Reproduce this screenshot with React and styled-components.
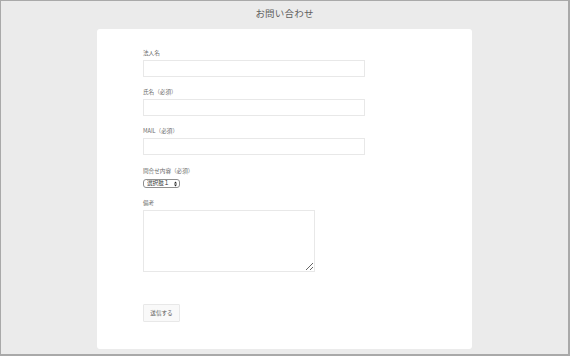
import React from 'react'
import styled, { createGlobalStyle } from 'styled-components'

const Global = createGlobalStyle`
  html, body { margin: 0; padding: 0; }
  body { background: #ebebeb; font-family: "Noto Sans CJK JP", "Noto Sans", sans-serif; }
  * { box-sizing: border-box; }
`

const Frame = styled.div`
  width: 570px;
  height: 356px;
  background: #ebebeb;
  border: 1px solid #a9a9a9;
  border-right-width: 2px;
  border-bottom-width: 2px;
  display: flex;
  flex-direction: column;
  align-items: center;
`

const Title = styled.h1`
  margin: 0;
  height: 28px;
  padding-top: 5px;
  font-size: 9.5px;
  line-height: 14px;
  font-weight: 400;
  color: #606060;
  letter-spacing: 0.2px;
`

const Card = styled.form`
  width: 375px;
  height: 320px;
  background: #fff;
  border-radius: 3px;
  padding: 20px 0 0 46px;
  display: flex;
  flex-direction: column;
  align-items: flex-start;
`

const Field = styled.div`
  display: flex;
  flex-direction: column;
  align-items: flex-start;
  margin-bottom: ${p => p.gap}px;
`

const Label = styled.label`
  display: block;
  font-size: 5.6px;
  line-height: 8px;
  height: 8px;
  color: #6a6a6a;
  margin-bottom: ${p => p.space || 3}px;
  white-space: nowrap;
`

const Input = styled.input`
  width: 222px;
  height: 17px;
  border: 1px solid #e8e8e8;
  background: #fff;
  padding: 0 4px;
  font-size: 6px;
  outline: none;
`

const SelectBox = styled.div`
  display: flex;
  align-items: center;
  height: 9px;
  width: 37px;
  border: 1px solid #8f8f8f;
  border-radius: 3px;
  padding: 0 2px 0 3px;
  background: #fff;
`

const Select = styled.select`
  appearance: none;
  border: none;
  background: transparent;
  padding: 0;
  margin: 0;
  flex: 1;
  height: 7px;
  font-size: 5.6px;
  line-height: 7px;
  color: #333;
  font-family: "Noto Sans CJK JP", sans-serif;
  outline: none;
`

const TextArea = styled.textarea`
  width: 172px;
  height: 62px;
  border: 1px solid #e8e8e8;
  padding: 3px;
  font-size: 6px;
  outline: none;
`

const Button = styled.button`
  width: 37px;
  height: 18px;
  border: 1px solid #e8e8e8;
  background: #f9f9f9;
  border-radius: 1px;
  font-size: 5.6px;
  color: #555;
  padding: 0;
  font-family: "Noto Sans CJK JP", sans-serif;
`

function Arrows() {
  return (
    <svg width="3" height="6" viewBox="0 0 3 6">
      <path d="M0 2.4 L1.5 0.4 L3 2.4 Z M0 3.6 L1.5 5.6 L3 3.6 Z" fill="#222" />
    </svg>
  )
}

export default function App() {
  return (
    <>
      <Global />
      <Frame>
        <Title>お問い合わせ</Title>
        <Card onSubmit={e => e.preventDefault()}>
          <Field gap={11}>
            <Label>法人名</Label>
            <Input type="text" />
          </Field>
          <Field gap={11}>
            <Label>氏名（必須）</Label>
            <Input type="text" />
          </Field>
          <Field gap={12}>
            <Label>MAIL（必須）</Label>
            <Input type="email" />
          </Field>
          <Field gap={11}>
            <Label space={4}>問合せ内容（必須）</Label>
            <SelectBox>
              <Select defaultValue="1">
                <option value="1">選択肢１</option>
                <option value="2">選択肢２</option>
              </Select>
              <Arrows />
            </SelectBox>
          </Field>
          <Field gap={32}>
            <Label>備考</Label>
            <TextArea />
          </Field>
          <Button type="submit">送信する</Button>
        </Card>
      </Frame>
    </>
  )
}
